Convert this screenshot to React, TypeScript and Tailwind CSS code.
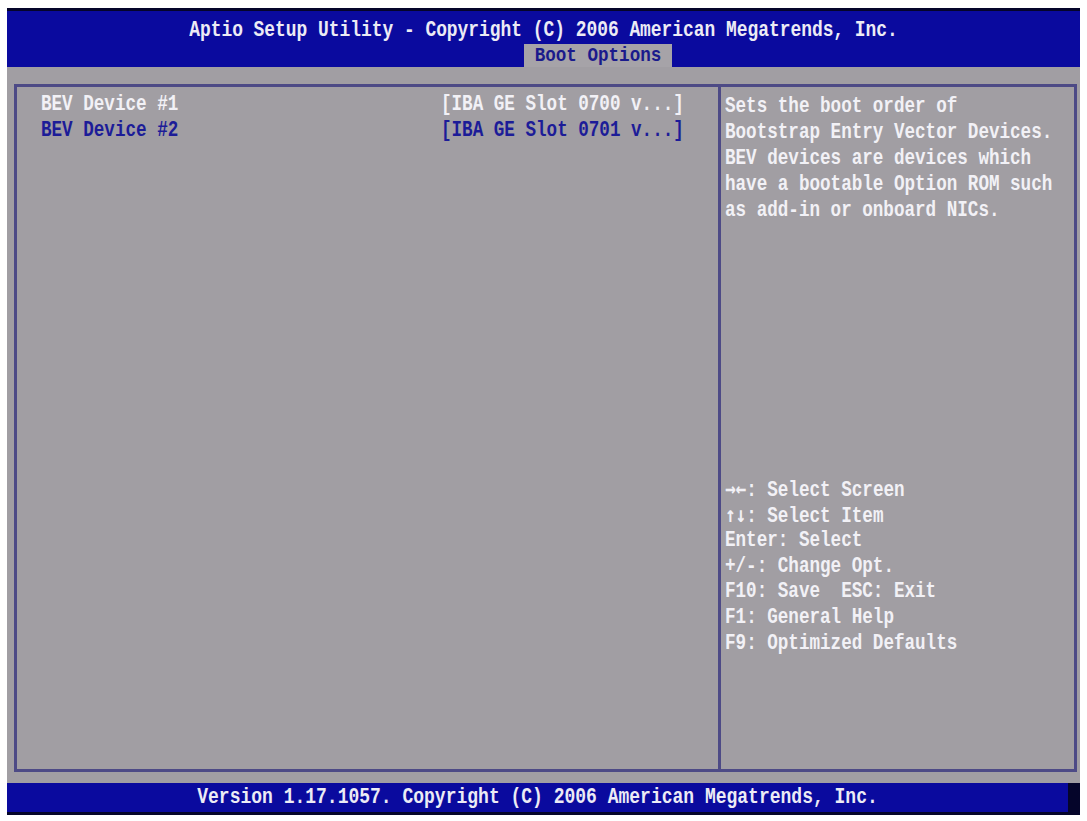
// Aptio setup screen: Boot Options page
const mono = "font-['Liberation_Mono','DejaVu_Sans_Mono',monospace] font-bold text-[17.6px] tracking-[0px]"
const arrows = "font-['DejaVu_Sans_Mono',monospace] text-[17.6px]"

const DEVICES = [
  { label: 'BEV Device #1', value: '[IBA GE Slot 0700 v...]', selected: true },
  { label: 'BEV Device #2', value: '[IBA GE Slot 0701 v...]', selected: false },
]

const HELP = [
  'Sets the boot order of',
  'Bootstrap Entry Vector Devices.',
  'BEV devices are devices which',
  'have a bootable Option ROM such',
  'as add-in or onboard NICs.',
]

const KEYS: { key: string; arrow?: boolean; text: string }[] = [
  { key: '→←', arrow: true, text: ': Select Screen' },
  { key: '↑↓', arrow: true, text: ': Select Item' },
  { key: 'Enter', text: ': Select' },
  { key: '+/-', text: ': Change Opt.' },
  { key: 'F10', text: ': Save  ESC: Exit' },
  { key: 'F1', text: ': General Help' },
  { key: 'F9', text: ': Optimized Defaults' },
]

function Line({ children, className = '' }: { children: React.ReactNode; className?: string }) {
  return (
    <div className={`h-[26px] leading-[26px] whitespace-pre scale-y-[1.25] ${className}`}>
      {children}
    </div>
  )
}

export default function App() {
  return (
    <div className={`w-[1087px] h-[821px] bg-white pl-[7px] pr-[7px] pt-[8px] pb-[6px] ${mono}`}>
      <div className="h-full flex flex-col bg-[#a19ea3]">
        {/* Title bar */}
        <header className="h-[59px] shrink-0 flex flex-col bg-[#0a0a9e] border-t-[3px] border-[#05052a] text-[#ecebf5]">
          <div className="pt-[6px] text-center text-[17.9px]">
            <Line>Aptio Setup Utility - Copyright (C) 2006 American Megatrends, Inc.</Line>
          </div>
          <div className="mt-auto pl-[517px]">
            <div className="w-[148px] h-[23px] bg-[#a6a3a8] text-[#1a1a8c] text-center">
              <div className="h-[23px] leading-[23px] scale-y-[1.2]">Boot Options</div>
            </div>
          </div>
        </header>

        {/* Main panel */}
        <main className="flex-1 min-h-0 pl-[7px] pr-[3px] pt-[17px] pb-[11px]">
          <div className="h-full flex border-[3px] border-[#4d4a86]">
            <section className="w-[704px] shrink-0 border-r-[3px] border-[#4d4a86] pt-[4px] pl-[24px]">
              {DEVICES.map((d) => (
                <div
                  key={d.label}
                  className={`flex ${d.selected ? 'text-[#f2f1f6]' : 'text-[#1c1c98]'}`}
                >
                  <div className="w-[400px] shrink-0">
                    <Line>{d.label}</Line>
                  </div>
                  <Line>{d.value}</Line>
                </div>
              ))}
            </section>

            <aside className="flex-1 flex flex-col pl-[4px] pt-[6px] text-[#f2f1f6]">
              <div>
                {HELP.map((t) => (
                  <Line key={t}>{t}</Line>
                ))}
              </div>
              <div className="mt-[254px]">
                {KEYS.map((k) => (
                  <div key={k.key} className="h-[25.6px] leading-[25.6px] whitespace-pre scale-y-[1.25]">
                    {k.arrow ? <span className={arrows}>{k.key}</span> : k.key}
                    {k.text}
                  </div>
                ))}
              </div>
            </aside>
          </div>
        </main>

        {/* Version bar */}
        <footer className="h-[32px] shrink-0 bg-[#0a0a9e] border-b-[3px] border-r-[12px] border-[#05052a] text-[#ecebf5] text-center text-[18px]">
          <div className="h-[29px] leading-[29px] scale-y-[1.25]">
            Version 1.17.1057. Copyright (C) 2006 American Megatrends, Inc.
          </div>
        </footer>
      </div>
    </div>
  )
}
